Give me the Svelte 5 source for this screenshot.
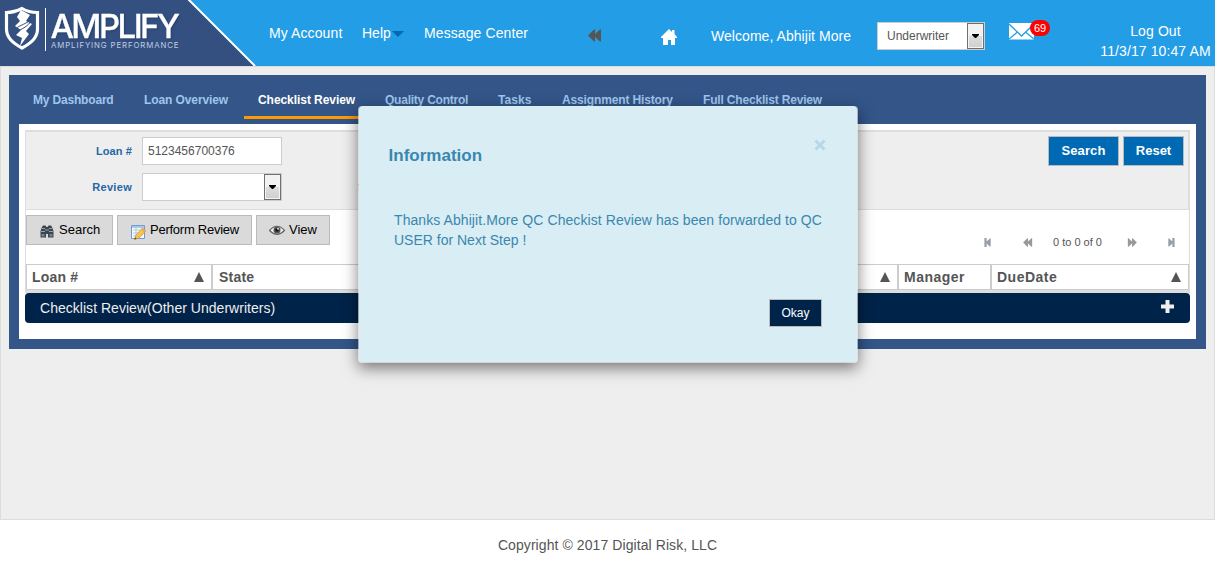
<script>
  const tabs = [
    { name: 'My Dashboard', width: 111 },
    { name: 'Loan Overview', width: 114 },
    { name: 'Checklist Review', width: 127, active: true },
    { name: 'Quality Control', width: 113 },
    { name: 'Tasks', width: 64 },
    { name: 'Assignment History', width: 141 },
    { name: 'Full Checklist Review', width: 150 }
  ];
  let query = $state('5123456700376');
</script>

{#snippet arrow()}
  <span class="arrow"><svg width="8" height="5" viewBox="0 0 8 5"><path d="M0 0H7V1L4 4H3L0 1Z" fill="#000" /></svg></span>
{/snippet}

{#snippet dbl(color, flip)}
  <svg class:flip width="14" height="13" viewBox="0 0 14 13"><path d="M6 .5H7V5L12 .5H13V12.500H12L7 8V12.500H6L0 6.500Z" fill={color} /></svg>
{/snippet}

{#snippet edge(flip)}
  <svg class:flip width="8" height="10" viewBox="0 0 8 10"><path d="M0 0H2.500V4L6 .5H7V9.500H6L2.500 6V10H0Z" fill="#999fa8" /></svg>
{/snippet}

<header>
  <svg class="logo" width="258" height="66" viewBox="0 0 258 66">
    <path d="M0 0H188L254 66H0Z" fill="#335081" />
    <path d="M188 -1L255 66" stroke="#fff" stroke-width="2" />
    <path d="M22 8.500C16 11.500 11 12.500 6.500 12.500V29C6.500 38 13 43 22 48C31 43 37.500 38 37.500 29V12.500C32 12.500 27 11.500 22 8.500Z" fill="#335081" stroke="#fff" stroke-width="3.200" />
    <path d="M21 10L30 15L26 21L32 24L26 31L29 34L20 46L22 38L16 35L21 30L15 26L20 21L17 17Z" fill="#fff" />
    <path d="M15 30C17 26 24 25 31 20M16 31C22 30 29 25 31 21" fill="none" stroke="#335081" stroke-width="1" />
    <path d="M45.500 8V51" stroke="#fff" />
    <g class="shadow">
      <text class="brand" x="50.500" y="38" textLength="129.500" lengthAdjust="spacing">AMPLIFY</text>
    </g>
    <text class="tagline" x="51" y="48" textLength="127.500">AMPLIFYING PERFORMANCE</text>
  </svg>
  <a class="account">My Account</a>
  <a class="help">Help<svg width="12" height="6" viewBox="0 0 12 6"><path d="M0 0H12L6 6Z" fill="#0069b4" /></svg></a>
  <a class="messages">Message Center</a>
  <span class="back">{@render dbl('#555', false)}</span>
  <svg class="home" width="16" height="16" viewBox="0 0 16 16"><path d="M8 0L11 3V1H13.500V5L16 8V9H14V16H10V11H7V16H2V9H0V8Z" fill="#fff" /></svg>
  <span class="welcome">Welcome, Abhijit More</span>
  <div class="select role"><span>Underwriter</span>{@render arrow()}</div>
  <div class="mail">
    <svg width="25" height="17" viewBox="0 0 25 17"><path d="M0 0H25V16.500H0Z" fill="#fff" /><path d="M0 1L12.500 13L25 1M0 16L8.500 9M25 16L16.500 9" fill="none" stroke="#239de6" stroke-width="1.300" /></svg>
    <span class="count">69</span>
  </div>
  <div class="session"><span class="logout">Log Out</span><span>11/3/17 10:47 AM</span></div>
</header>

<main>
  <section class="panel">
    <nav>
      {#each tabs as tab}
        <div class="tab" class:active={tab.active} style:width="{tab.width}px"><span>{tab.name}</span></div>
      {/each}
    </nav>
    <div class="sheet">
      <div class="frame">
        <div class="filters">
          <div class="fields">
            <label for="loan">Loan #</label><input id="loan" bind:value={query} /><i></i>
            <span class="label">Review</span><div class="select"><span></span>{@render arrow()}</div><i class="mark"></i>
          </div>
          <div class="actions"><button class="b1">Search</button><button class="b2">Reset</button></div>
        </div>
        <div class="tools">
          <button class="t1">
            <svg width="14" height="13" viewBox="0 0 14 13"><path d="M2 2L3 .5H5.500L6.500 2H7.500L8.500 .5H11L12 2L13.500 6V12.500H8V9H6V12.500H.5V6Z" fill="#3d454d" /><path d="M2 3.500H5M9 3.500H12M1 6.500H5M9 6.500H13M5 5H9" stroke="#93a1ae" /><path d="M1.500 9H4.500V11.500H1.500ZM9.500 9H12.500V11.500H9.500Z" fill="#748390" /></svg>
            <span>Search</span></button>
          <button class="t2">
            <svg width="16" height="16" viewBox="0 0 16 16"><path d="M.5 1.500H13.500V14.500H.5Z" fill="#f4f9ff" stroke="#6e9cd2" /><path d="M1 3H13" stroke="#a9c8ea" stroke-width="2" /><path d="M2 6H11M2 9H9M2 12H7M5 4V14" stroke="#b4cbd6" /><path d="M11.500 4L15 7L8 14L3.500 15.500L5 11Z" fill="#f5c550" stroke="#c9943f" stroke-width=".7" /><path d="M11.500 4L15 7L13.500 8.500L10 5.500Z" fill="#eea46c" /><path d="M3.500 15.500L4.200 13.500L5.700 14.700Z" fill="#553b29" /></svg>
            <span>Perform Review</span></button>
          <button class="t3">
            <svg width="16" height="11" viewBox="0 0 16 11"><path d="M.5 5.500Q8 -3 15.500 5.500Q8 13 .5 5.500Z" fill="#f3f3f3" stroke="#666" stroke-width="1.200" /><circle cx="8" cy="5" r="3.500" fill="#555" /><circle cx="8" cy="5" r="1.700" fill="#111" /><circle cx="9" cy="3.700" r="1" fill="#ddd" /></svg>
            <span>View</span></button>
        </div>
        <div class="pager">
          {@render edge(false)}
          <span class="small">{@render dbl('#999', false)}</span>
          <span class="range">0 to 0 of 0</span>
          <span class="small">{@render dbl('#999', true)}</span>
          {@render edge(true)}
        </div>
        <div class="thead">
          <div class="th"><span class="h1">Loan #</span><i></i></div>
          <div class="th"><span class="h2">State</span><i></i></div>
          <div class="th"><span class="h3">Manager</span></div>
          <div class="th"><span class="h4">DueDate</span><i></i></div>
        </div>
      </div>
      <div class="accordion"><span>Checklist Review(Other Underwriters)</span><svg width="14" height="14" viewBox="0 0 14 14"><path d="M4.500 0H8.500V4.500H13V8.500H8.500V13H4.500V8.500H0V4.500H4.500Z" fill="#eee" /></svg></div>
    </div>
  </section>
</main>
<footer><span>Copyright © 2017 Digital Risk, LLC</span></footer>

<div class="modal" role="dialog" aria-labelledby="title">
  <div class="top"><h2 id="title">Information</h2><svg width="12" height="12" viewBox="0 0 12 12"><path d="M1.500 1.500L10.500 10.500M10.500 1.500L1.500 10.500" stroke="#b7d7e8" stroke-width="3" /></svg></div>
  <p><span class="m1">Thanks Abhijit.More QC Checkist Review has been forwarded to QC</span><br /><span class="m2">USER for Next Step !</span></p>
  <button class="okay">Okay</button>
</div>

<style>
  :global(body) { background: #fff; overflow: hidden; }
  :global(*) { box-sizing: border-box; }
  :global(#app) { font: 14px/20px "Liberation Sans", Arial, sans-serif; color: #555; width: 1215px; height: 563px; white-space: nowrap; }
  svg { display: block; flex: none; }
  .flip { transform: scaleX(-1); }
  button, input { font: inherit; margin: 0; padding: 0; border-radius: 0; white-space: nowrap; }
  header { height: 66px; background: #239de6; color: #fff; display: grid; grid-template-columns: 269px 93px 62px 164px 73px 50px 166px 131px 92px 115px; align-items: start; }
  .logo { width: 258px; }
  .brand { font: 500 33px Inter, sans-serif; fill: #fff; stroke: #fff; stroke-width: .3px; }
  .shadow { filter: drop-shadow(1px 1px 1px #263f6c); }
  .tagline { font: 400 7.800px Inter, sans-serif; fill: #c0cce0; }
  .account, .help, .messages { margin-top: 23px; }
  .account, .messages, .session { letter-spacing: .1px; }
  .help { display: flex; gap: 1px; }
  .help svg { margin-top: 8px; }
  .back { margin-top: 29px; }
  .home { margin-top: 29px; }
  .welcome { margin-top: 26px; letter-spacing: .05px; }
  .select { display: flex; width: 140px; height: 28px; background: #fff; border: 1px solid #ccc; color: #555; justify-content: space-between; font-size: 12px; line-height: 26px; }
  .role { width: 108px; margin-top: 22px; padding-left: 9px; }
  .arrow { width: 17px; height: 26px; border: 1px solid #707070; background: linear-gradient(#f2f2f2 50%, #ddd 50%, #cfcfcf); display: grid; place-items: center; box-shadow: inset 0 0 0 1px #f4f4f4; }
  .mail { display: flex; margin-top: 20px; }
  .mail svg { margin: 3px 0 0 1px; }
  .count { width: 20px; height: 16px; border-radius: 8px; background: red; margin-left: -4px; font-size: 11px; line-height: 17px; text-align: center; z-index: 1; }
  .session { display: flex; flex-direction: column; align-items: center; width: 111px; margin: 21px 0 0; }
  main { height: 454px; background: #eee; border: 1px solid #ddd; padding: 8px; }
  .panel { width: 1197px; height: 274px; background: #335588; padding: 0 10px 10px; }
  nav { display: flex; height: 49px; padding-left: 14px; font-weight: 700; font-size: 12px; line-height: 50px; color: #9fc5ed; letter-spacing: -.18px; }
  .tab { height: 44px; }
  .tab:nth-child(2) { letter-spacing: -.1px; }
  .tab:nth-child(3) { letter-spacing: -.06px; }
  .tab:nth-child(4) { letter-spacing: -.23px; }
  .tab:nth-child(5) { letter-spacing: .1px; }
  .tab:nth-child(6) { letter-spacing: -.14px; }
  .tab.active { color: #fff; border-bottom: 3px solid #f90; padding-left: 14px; margin-left: -14px; box-sizing: content-box; height: 41px; }
  .sheet { height: 215px; background: #fff; padding: 6px 6px 0; }
  .frame { height: 163px; width: 1165px; border: 1px solid #ddd; border-bottom-width: 3px; }
  .filters { height: 79px; background: #eee; border: solid #ddd; border-width: 1px 1px 1px 0; display: flex; justify-content: space-between; }
  .fields { display: grid; grid-template-columns: 106px 140px 77px; column-gap: 10px; row-gap: 8px; align-content: start; padding-top: 5px; }
  .fields i { width: 77px; }
  .fields .mark { width: 1px; height: 6px; border: solid #f08020; border-width: 2px 0 1px; margin: 11px 0 0 66px; }
  label, .label { color: #2467a5; font-weight: 700; font-size: 11px; text-align: right; line-height: 28px; letter-spacing: .1px; }
  .label { letter-spacing: .3px; }
  input { height: 28px; border: 1px solid #ccc; padding-left: 5px; font-size: 12px; color: #555; background: #fff; outline: 0; }
  .actions { display: flex; gap: 4px; padding: 4px 4px 0 0; }
  .actions button { height: 30px; border: 1px solid #bbb; background: #0069b4; color: #fff; font-size: 13px; font-weight: 700; }
  .b1 { width: 71px; letter-spacing: .1px; }
  .b2 { width: 61px; }
  .tools { display: flex; gap: 4px; height: 30px; margin-top: 5px; }
  .tools button { height: 30px; border: 1px solid #bbb; background: #dadada; color: #000; display: flex; gap: 5px; line-height: 28px; font-size: 13px; }
  .tools .t1 { width: 87px; padding-left: 13px; }
  .t1 svg, .t3 svg { margin-top: 9px; }
  .tools .t2 { width: 135px; padding-left: 13px; gap: 3px; }
  .t2 span { letter-spacing: -.25px; }
  .t2 svg { margin-top: 8px; }
  .tools .t3 { width: 74px; padding-left: 12px; gap: 4px; }
  .pager { display: flex; height: 19px; margin: -8px 14px 0 958px; line-height: 11px; }
  .pager svg { margin-top: 1px; height: 9px; }
  .pager .small { margin-left: 31px; }
  .small svg { width: 10px; }
  .range { color: #555; font-size: 11px; margin-left: 20px; width: 49px; margin-right: -6px; }
  .pager > svg:last-child { margin-left: 30px; }
  .thead { width: 1163px; margin-top: 8px; height: 26px; border: solid #ccc; border-width: 1px 0; display: grid; grid-template-columns: 186px 686px 93px 198px; font-weight: 700; line-height: 25px; letter-spacing: .2px; }
  .th { display: flex; justify-content: space-between; padding: 0 7px 0 5px; border: solid #ccc; border-width: 0 1px; }
  .h2 { margin-left: 1px; }
  .h3, .h4 { letter-spacing: .5px; }
  .th i { width: 10px; height: 10px; margin-top: 7px; background: #555; clip-path: polygon(50% 0, 100% 100%, 0 100%); }
  .accordion { height: 30px; width: 1165px; border-radius: 4px; background: #002349; color: #eee; padding: 0 15px; display: flex; justify-content: space-between; line-height: 30px; letter-spacing: .03px; }
  .accordion svg { margin-top: 7px; }
  footer { padding-top: 15px; text-align: center; letter-spacing: .08px; }
  .modal { position: absolute; left: 358px; top: 106px; width: 500px; height: 257px; border: 1px solid rgba(255,255,255,.6); border-top: 0; background: #d9edf5; background-clip: padding-box; border-radius: 4px; box-shadow: 0 5px 15px rgba(0,0,0,.5); color: #3a87ad; padding: 33px 35px 0 29px; }
  .top { display: flex; justify-content: space-between; }
  h2 { font-size: 17px; line-height: 34px; margin: 0 0 0 .6px; }
  .top svg { margin-right: -4px; }
  p { margin: 37px 0 0 6px; }
  .m1 { letter-spacing: .075px; }
  .okay { display: block; width: 53px; height: 28px; margin: 49px 0 0 auto; background: #002349; border: 1px solid #bbb; color: #fff; font-size: 12px; }
</style>
